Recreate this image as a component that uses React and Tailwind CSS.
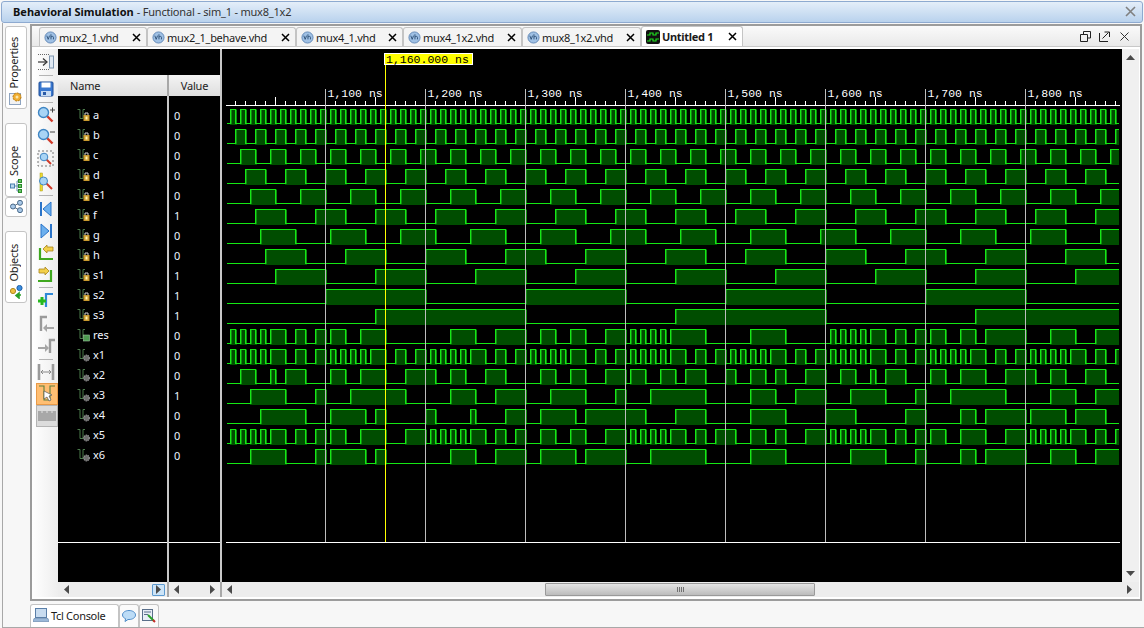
import React from "react";

const UI = { fontFamily: '"Noto Sans", "Liberation Sans", sans-serif' };
const MONO = '"Liberation Mono", monospace';

const clk = (x, s, p, h) => x >= s && (x - s) % p < h;
const mux = (a, b, s) => (s ? b : a);
const calc = (x) => {
  const a = clk(x, 230, 10, 5), b = clk(x, 235, 20, 10), c = clk(x, 240, 30, 15), d = clk(x, 245, 40, 20);
  const e1 = clk(x, 250, 50, 25), f = clk(x, 255, 60, 30), g = clk(x, 260, 70, 35), h = clk(x, 265, 80, 40);
  const s1 = clk(x, 275, 100, 50), s2 = clk(x, 325, 200, 100), s3 = clk(x, 375, 300, 150);
  const x1 = mux(a, b, s1), x2 = mux(c, d, s1), x3 = mux(e1, f, s1), x4 = mux(g, h, s1);
  const x5 = mux(x1, x2, s2), x6 = mux(x3, x4, s2), res = mux(x5, x6, s3);
  return { a, b, c, d, e1, f, g, h, s1, s2, s3, res, x1, x2, x3, x4, x5, x6 };
};

const SIGNALS = [
  ["a", "0", "lock"], ["b", "0", "lock"], ["c", "0", "lock"], ["d", "0", "lock"], ["e1", "0", "lock"],
  ["f", "1", "lock"], ["g", "0", "lock"], ["h", "0", "lock"], ["s1", "1", "lock"], ["s2", "1", "lock"],
  ["s3", "1", "lock"], ["res", "0", "out"], ["x1", "0", "gear"], ["x2", "0", "gear"], ["x3", "1", "gear"],
  ["x4", "0", "gear"], ["x5", "0", "gear"], ["x6", "0", "gear"],
];

function Wave({ name, index }) {
  const base = 123 + index * 20;
  const top = base - 14;
  const X0 = 227, X1 = 1119;
  let line = `M${X0} ${base + 0.5}`;
  let prev = false;
  let start = X0;
  const rects = [];
  const edges = [];
  for (let x = 230; x < X1; x += 5) {
    const v = calc(x)[name];
    if (v !== prev) {
      const y = v ? top + 0.5 : base + 0.5;
      line += `H${x + 0.5}V${y}`;
      if (v) start = x;
      else rects.push([start, x]);
      edges.push(x);
      prev = v;
    }
  }
  if (prev) rects.push([start, X1]);
  line += `H${X1}`;
  return (
    <g>
      {rects.map(([s, e], i) => (
        <rect key={i} x={s} y={top} width={Math.min(e + 2, X1) - s} height={16} fill="#004d00" />
      ))}
      {edges.map((x, i) => (
        <rect key={i} x={x + 1} y={top + 1} width={1} height={14} fill="#0f8f0f" />
      ))}
      <path d={line} fill="none" stroke="#14e814" strokeWidth="1" />
    </g>
  );
}

function WaveView() {
  const majors = [325, 425, 525, 625, 725, 825, 925, 1025];
  const labels = ["1,100 ns", "1,200 ns", "1,300 ns", "1,400 ns", "1,500 ns", "1,600 ns", "1,700 ns", "1,800 ns"];
  const ticks = [];
  for (let x = 235; x < 1120; x += 10) ticks.push(x);
  return (
    <svg width="900" height="533" viewBox="222 49 900 533" shapeRendering="crispEdges" className="block shrink-0 bg-black">
      {ticks.map((x) => {
        const m = (x - 25) % 100 === 0;
        const mid = (x - 75) % 100 === 0;
        if (m) return null;
        return <rect key={x} x={x} y={mid ? 97 : 101} width="1" height={mid ? 8 : 4} fill="#ffffff" />;
      })}
      <rect x="226" y="105" width="894" height="1" fill="#ffffff" />
      {SIGNALS.map(([n], i) => (
        <Wave key={n} name={n} index={i} />
      ))}
      {majors.map((x) => (
        <rect key={x} x={x} y="89" width="1" height="453" fill="#bdbdbd" />
      ))}
      {majors.map((x, i) => (
        <text key={x} x={x + 2.5} y="97" fontFamily={MONO} fontSize="11.5" fill="#ffffff" shapeRendering="auto">
          {labels[i]}
        </text>
      ))}
      <rect x="385" y="65" width="1" height="477" fill="#ffff00" />
      <rect x="226" y="542" width="894" height="1" fill="#ffffff" />
      <rect x="384" y="53" width="89" height="12" fill="#ffffff" />
      <rect x="385" y="54" width="87" height="10" fill="#ffff00" />
      <text x="386" y="62.500" fontFamily={MONO} fontSize="11.5" fill="#000000" shapeRendering="auto">1,160.000 ns</text>
    </svg>
  );
}

function VhIcon() {
  return (
    <svg width="13" height="13" viewBox="0 0 14 14" className="shrink-0">
      <circle cx="7" cy="7" r="6" fill="#9fc0e4" stroke="#5f86b4" />
      <path d="M3 5l1.500 4 1.500-4M7.500 3.500v5.500M7.500 6.500c1-1 2.700-1 2.700.5v2" fill="none" stroke="#24476e" strokeWidth="0.9" />
    </svg>
  );
}

function WaveTabIcon() {
  return (
    <svg width="14" height="14" viewBox="0 0 14 14" className="shrink-0">
      <rect width="14" height="14" rx="2" fill="#111" />
      <path d="M1 5h3V3h3v2h3V3h3M1 11h3V9h3v2h3V9h3" fill="none" stroke="#20e020" strokeWidth="1.2" />
    </svg>
  );
}

function CloseX() {
  return (
    <svg width="9" height="9" viewBox="0 0 9 9" className="shrink-0">
      <path d="M1 1l7 7M8 1l-7 7" stroke="#000" strokeWidth="1.5" />
    </svg>
  );
}

function FileTab({ w, label, active, waveform }) {
  return (
    <div
      className={`${w} flex items-center pl-[4px] pr-[5px] border border-b-0 border-[#c4c4c4] rounded-t-[3px] ${active ? "bg-white font-bold h-[20px]" : "bg-[#f4f4f4] h-[19px]"}`}
    >
      {waveform ? <WaveTabIcon /> : <VhIcon />}
      <span className="ml-[2px] text-[11px] tracking-[-0.3px] text-[#1a1a1a] flex-1 whitespace-nowrap leading-none">{label}</span>
      <CloseX />
    </div>
  );
}

function Lens({ mark }) {
  return (
    <svg width="18" height="18" viewBox="0 0 18 18">
      <path d="M9.500 9.500l6 6" stroke="#d03a2a" strokeWidth="2.4" />
      <circle cx="6.500" cy="6.500" r="5" fill="#a8d4f5" stroke="#3f86c4" strokeWidth="1.4" />
      {mark === "+" && <path d="M13 4h5M15.500 1.500v5" stroke="#444" strokeWidth="1" />}
      {mark === "-" && <path d="M13 4h5" stroke="#444" strokeWidth="1" />}
    </svg>
  );
}

const TOOLS = {
  jump: (
    <svg width="18" height="18" viewBox="0 0 18 18">
      <path d="M1 1.500h12M1 16.500h12" stroke="#666" strokeDasharray="1 1" />
      <path d="M1 9h8" stroke="#333" strokeWidth="1.2" />
      <path d="M6 5.500L10 9l-4 3.500" fill="none" stroke="#333" strokeWidth="1.2" />
      <rect x="12.500" y="3" width="4" height="12" fill="#dfe8f2" stroke="#7c94ad" />
    </svg>
  ),
  save: (
    <svg width="16" height="16" viewBox="0 0 16 16">
      <rect x="1" y="1" width="14" height="14" rx="1" fill="#3a78d0" stroke="#1f4f98" />
      <rect x="3.500" y="1.500" width="9" height="5" fill="#ffffff" />
      <rect x="3" y="10" width="10" height="5" fill="#c8dcf4" />
      <rect x="5" y="11" width="3" height="3" fill="#2a5ba8" />
    </svg>
  ),
  plus: <Lens mark="+" />,
  minus: <Lens mark="-" />,
  fit: (
    <svg width="18" height="18" viewBox="0 0 18 18">
      <rect x="1" y="1" width="15" height="15" fill="#f4f4f4" stroke="#777" strokeDasharray="2 2" />
      <path d="M9 9l5 5" stroke="#d03a2a" strokeWidth="2" />
      <circle cx="7" cy="7" r="3.800" fill="#a8d4f5" stroke="#3f86c4" />
    </svg>
  ),
  cursor: (
    <svg width="18" height="20" viewBox="0 0 18 20">
      <rect x="3" y="1" width="2.500" height="18" fill="#ecd930" stroke="#a89a18" strokeWidth="0.5" />
      <path d="M9 11l6 6" stroke="#d03a2a" strokeWidth="2" />
      <circle cx="6.500" cy="9" r="4" fill="#a8d4f5" stroke="#3f86c4" />
    </svg>
  ),
  first: (
    <svg width="14" height="16" viewBox="0 0 14 16">
      <rect x="1" y="1" width="2" height="14" fill="#2b74c8" />
      <path d="M12 1v14L4 8z" fill="#6db0ee" stroke="#2b74c8" />
    </svg>
  ),
  last: (
    <svg width="14" height="16" viewBox="0 0 14 16">
      <rect x="11" y="1" width="2" height="14" fill="#2b74c8" />
      <path d="M2 1v14l8-7z" fill="#6db0ee" stroke="#2b74c8" />
    </svg>
  ),
  prev: (
    <svg width="18" height="18" viewBox="0 0 18 18">
      <path d="M3 4v11h13" fill="none" stroke="#3fa81f" strokeWidth="2.2" />
      <path d="M6 5l4-4v2h6v4h-6v2z" fill="#f3d04a" stroke="#a8861c" strokeWidth="0.8" />
    </svg>
  ),
  next: (
    <svg width="18" height="18" viewBox="0 0 18 18">
      <path d="M1 15h13V4" fill="none" stroke="#3fa81f" strokeWidth="2.2" />
      <path d="M12 5L8 1v2H2v4h6v2z" fill="#f3d04a" stroke="#a8861c" strokeWidth="0.8" />
    </svg>
  ),
  add: (
    <svg width="18" height="18" viewBox="0 0 18 18">
      <path d="M9 16V3h7" fill="none" stroke="#2f8ad8" strokeWidth="2.2" />
      <path d="M1 10h8M5 6v8" stroke="#27b81f" strokeWidth="3" />
    </svg>
  ),
  mprev: (
    <svg width="18" height="18" viewBox="0 0 18 18">
      <path d="M4 16V2h6" fill="none" stroke="#9a9a9a" strokeWidth="2.4" />
      <path d="M17 12H10V9l-4 4 4 4v-3h7z" fill="#a6a6a6" />
    </svg>
  ),
  mnext: (
    <svg width="18" height="18" viewBox="0 0 18 18">
      <path d="M13 16V3h5" fill="none" stroke="#9a9a9a" strokeWidth="2.4" />
      <path d="M1 10h7V7l4 4-4 4v-3H1z" fill="#a6a6a6" />
    </svg>
  ),
  swap: (
    <svg width="18" height="18" viewBox="0 0 18 18">
      <path d="M2 1v16M16 1v16" stroke="#9a9a9a" strokeWidth="2.6" />
      <path d="M4 9h10M6 7L4 9l2 2M12 7l2 2-2 2" fill="none" stroke="#888" />
    </svg>
  ),
  active: (
    <svg width="18" height="18" viewBox="0 0 18 18">
      <path d="M1 1h5v14h6V1h5" fill="none" stroke="#5c7f3c" strokeWidth="1.1" />
      <path d="M6 6l8 4-3 1 2 4-2 1-2-4-3 2z" fill="#ffffff" stroke="#555" strokeWidth="0.7" />
    </svg>
  ),
  bars: (
    <svg width="18" height="10" viewBox="0 0 18 10">
      <rect width="18" height="10" fill="#a8a8a8" />
      <path d="M4 0v2M9 0v2M14 0v2" stroke="#e2e2e2" />
    </svg>
  ),
};

function Tool({ icon, h = "h-[22px]" }) {
  return <div className={`${h} flex items-center justify-center`}>{TOOLS[icon]}</div>;
}
function Sep({ h }) {
  return (
    <div className={`${h} flex items-center justify-center`}>
      <div className="w-[14px] h-px bg-[#b4b4b4]" />
    </div>
  );
}

function Toolbar() {
  return (
    <div className="w-[26px] shrink-0 flex flex-col bg-gradient-to-r from-white to-[#eeeeee] pt-[1px] pl-[1px]">
      <Tool icon="jump" h="h-[24px]" />
      <Sep h="h-[3px]" />
      <Tool icon="save" h="h-[24px]" />
      <Sep h="h-[3px]" />
      <Tool icon="plus" />
      <Tool icon="minus" />
      <Tool icon="fit" />
      <Tool icon="cursor" h="h-[23px]" />
      <Sep h="h-[5px]" />
      <Tool icon="first" />
      <Tool icon="last" />
      <Tool icon="prev" />
      <Tool icon="next" />
      <Sep h="h-[3px]" />
      <Tool icon="add" />
      <div className="h-[2px]" />
      <Tool icon="mprev" />
      <Tool icon="mnext" />
      <Sep h="h-[4px]" />
      <Tool icon="swap" />
      <div className="h-[22px] ml-[3px] flex items-center justify-center bg-[#ffbe72] border border-[#e89a48]">{TOOLS.active}</div>
      <div className="h-[22px] ml-[3px] flex items-center justify-center bg-[#dcdcdc] border border-[#b4b4b4]">{TOOLS.bars}</div>
    </div>
  );
}

function SigIcon({ kind }) {
  return (
    <svg width="14" height="14" viewBox="0 0 14 14" className="shrink-0">
      <path d="M0.500 1.500h2.500v9h3v-9h2" fill="none" stroke="#4a7a4a" strokeWidth="1" />
      {kind === "lock" && (
        <g>
          <rect x="6.500" y="7" width="6" height="6" fill="#c99a2e" />
          <path d="M8 7V5h3v2" fill="none" stroke="#d0d0d0" />
          <rect x="8.500" y="8.500" width="2" height="3" fill="#fff2b0" />
        </g>
      )}
      {kind === "out" && <rect x="6.500" y="7" width="6" height="6" fill="#4d9a50" stroke="#9fc8a0" strokeWidth="0.6" />}
      {kind === "gear" && <circle cx="9.500" cy="10" r="2.800" fill="#6e6e6e" stroke="#9a9a9a" strokeWidth="1.2" strokeDasharray="1.2 0.8" />}
    </svg>
  );
}

function HeadCell({ w, children }) {
  return (
    <div className={`${w} h-[21px] flex items-center pl-[12px] bg-gradient-to-b from-[#f4f4f4] to-[#dedede] text-[11px] tracking-[-0.2px] text-[#1c1c1c] leading-none`}>
      {children}
    </div>
  );
}

function Tri({ dir, dark }) {
  const d = { l: "M5 0v9L0 4.500z", r: "M0 0v9l5-4.500z", u: "M0 5h9L4.500 0z", D: "M0 0h9L4.500 5z" }[dir];
  const wide = dir === "u" || dir === "D";
  return (
    <svg width={wide ? 9 : 5} height={wide ? 5 : 9} viewBox={wide ? "0 0 9 5" : "0 0 5 9"} className="shrink-0">
      <path d={d} fill={dark || "#4a4a4a"} />
    </svg>
  );
}

function NamePane() {
  return (
    <div className="w-[162px] shrink-0 flex flex-col bg-black">
      <div className="h-[26px]" />
      <div className="flex">
        <HeadCell w="w-[109px]">Name</HeadCell>
        <div className="w-[2px] bg-[#a8a8a8]" />
        <HeadCell w="flex-1 justify-center !pl-0">Value</HeadCell>
      </div>
      <div className="flex-1 flex min-h-0">
        <div className="w-[109px] flex flex-col">
          <div className="h-[9px]" />
          {SIGNALS.map(([n, , k]) => (
            <div key={n} className="h-[20px] flex items-center pl-[19px] gap-[2px] pb-[1px] text-[11px] text-[#f2f6ff] leading-none">
              <SigIcon kind={k} />
              <span>{n}</span>
            </div>
          ))}
          <div className="flex-1" />
          <div className="h-px bg-white mb-[39px]" />
        </div>
        <div className="w-[2px] bg-[#c8c8c8]" />
        <div className="flex-1 flex flex-col">
          <div className="h-[9px]" />
          {SIGNALS.map(([n, v]) => (
            <div key={n} className="h-[20px] flex items-center pl-[5px] text-[11px] text-[#eaf4ff] leading-none">
              {v}
            </div>
          ))}
          <div className="flex-1" />
          <div className="h-px bg-white mb-[39px]" />
        </div>
      </div>
    </div>
  );
}

function BottomScrolls() {
  return (
    <div className="h-[15px] flex bg-[#ededed]">
      <div className="w-[109px] flex items-center pl-[6px] pr-[2px] justify-between">
        <Tri dir="l" />
        <div className="w-[13px] h-[12px] flex items-center justify-center bg-[#cde4f7] border border-[#5d9ad0] rounded-[1px]">
          <Tri dir="r" />
        </div>
      </div>
      <div className="w-[2px] bg-[#a8a8a8]" />
      <div className="w-[51px] flex items-center px-[5px] justify-between">
        <Tri dir="l" />
        <Tri dir="r" />
      </div>
      <div className="w-[2px] bg-[#a8a8a8]" />
      <div className="flex-1 flex items-center pl-[5px] pr-[7px]">
        <Tri dir="l" />
        <div className="w-[313px] shrink-0" />
        <div className="w-[270px] h-[13px] shrink-0 flex items-center justify-center gap-[1px] bg-gradient-to-b from-[#e4e4e4] to-[#bcbcbc] border border-[#9a9a9a] rounded-[1px]">
          <div className="w-px h-[5px] bg-[#707070]" />
          <div className="w-px h-[5px] bg-[#707070]" />
          <div className="w-px h-[5px] bg-[#707070]" />
          <div className="w-px h-[5px] bg-[#707070]" />
        </div>
        <div className="flex-1" />
        <Tri dir="r" />
      </div>
    </div>
  );
}

function SideTab({ h, label, icon }) {
  return (
    <div className={`${h} w-[22px] flex flex-col items-center justify-end pb-[3px] gap-[3px] bg-white border border-[#c4c4c4] rounded-[3px]`}>
      {label && (
        <span className="[writing-mode:vertical-rl] rotate-180 mr-[5px] text-[11px] tracking-[-0.2px] text-[#1a1a1a] leading-none whitespace-nowrap">{label}</span>
      )}
      {icon}
    </div>
  );
}

const propIcon = (
  <svg width="14" height="14" viewBox="0 0 14 14">
    <rect x="0.500" y="2.500" width="11" height="11" fill="#f2f2f2" stroke="#8ea4c0" />
    <circle cx="8" cy="6" r="4" fill="#f0ad30" stroke="#b57a14" strokeDasharray="2 1" />
    <circle cx="8" cy="6" r="1.500" fill="#fbe6a8" />
  </svg>
);
const scopeIcon = (
  <svg width="12" height="14" viewBox="0 0 12 14">
    <path d="M5 7h4M7 2v10M7 2h2M7 12h2" stroke="#6a8fb0" fill="none" />
    <rect x="0.500" y="5" width="4" height="4" fill="#bcd8f0" stroke="#4a80b0" />
    <rect x="8.500" y="0.500" width="3" height="3" fill="#6ac86a" stroke="#2a8a2a" />
    <rect x="8.500" y="5.500" width="3" height="3" fill="#6ac86a" stroke="#2a8a2a" />
    <rect x="8.500" y="10.500" width="3" height="3" fill="#6ac86a" stroke="#2a8a2a" />
  </svg>
);
const nodesIcon = (
  <svg width="13" height="13" viewBox="0 0 13 13">
    <path d="M3 6.500L10 2.500M3 6.500L10 10.500" stroke="#607080" />
    <circle cx="3" cy="6.500" r="2.500" fill="#a8c8e8" stroke="#4a6a8a" />
    <circle cx="10" cy="2.800" r="2.500" fill="#a8c8e8" stroke="#4a6a8a" />
    <circle cx="10" cy="10.200" r="2.500" fill="#a8c8e8" stroke="#4a6a8a" />
  </svg>
);
const objIcon = (
  <svg width="13" height="14" viewBox="0 0 13 14">
    <circle cx="3" cy="6" r="2.600" fill="#f0c040" stroke="#b08a20" />
    <circle cx="9.500" cy="3" r="2.600" fill="#3a8ee0" stroke="#1f60a8" />
    <path d="M7 10h4M9 8l-3 2.500 3 2.500z" stroke="#2aa02a" strokeWidth="1.600" fill="#2aa02a" />
  </svg>
);

function Sidebar() {
  return (
    <div className="w-[27px] shrink-0 flex flex-col items-start pl-[2px]">
      <div className="h-[3px]" />
      <SideTab h="h-[83px]" label="Properties" icon={propIcon} />
      <div className="h-[14px]" />
      <SideTab h="h-[74px]" label="Scope" icon={scopeIcon} />
      <SideTab h="h-[20px]" icon={nodesIcon} />
      <div className="h-[14px]" />
      <SideTab h="h-[72px]" label="Objects" icon={objIcon} />
    </div>
  );
}

export default function App() {
  return (
    <div className="w-[1144px] h-[628px] flex flex-col bg-[#f7f7f7] overflow-hidden" style={UI}>
      <div className="h-[22px] mt-[1px] mx-[1px] shrink-0 flex items-center pl-[11px] pr-[6px] pb-[1px] bg-gradient-to-b from-[#e4eef9] to-[#b9d2ed] border border-[#8eaad0] rounded-[3px] text-[11px] text-[#222] leading-none">
        <span className="font-bold text-[#111]">Behavioral Simulation</span>
        <span className="ml-[3px] tracking-[-0.2px] text-[#333]">- Functional - sim_1 - mux8_1x2</span>
        <div className="flex-1" />
        <svg width="11" height="11" viewBox="0 0 11 11">
          <path d="M1 1l9 9M10 1l-9 9" stroke="#808080" strokeWidth="1.600" />
        </svg>
      </div>

      <div className="flex-1 min-h-0 flex ml-[2px] border-l border-[#a8a8a8]">
        <Sidebar />
        <div className="w-[1112px] h-[577px] mt-[1px] flex flex-col border-2 border-[#9c9c9c] bg-white">
          <div className="h-[21px] shrink-0 flex items-end pl-[7px] pr-[10px] bg-gradient-to-b from-[#fafafa] to-[#e9e9e9] border-b border-[#c8c8c8]">
            <FileTab w="w-[108px]" label="mux2_1.vhd" />
            <FileTab w="w-[149px]" label="mux2_1_behave.vhd" />
            <FileTab w="w-[107px]" label="mux4_1.vhd" />
            <FileTab w="w-[119px]" label="mux4_1x2.vhd" />
            <FileTab w="w-[119px]" label="mux8_1x2.vhd" />
            <FileTab w="w-[102px]" label="Untitled 1" active waveform />
            <div className="flex-1" />
            <div className="h-[19px] flex items-center gap-[8px]">
              <svg width="11" height="11" viewBox="0 0 11 11">
                <path d="M3.500 3V.5h7V7H8M.5 3.500h7v7h-7z" fill="none" stroke="#222" />
              </svg>
              <svg width="11" height="11" viewBox="0 0 11 11">
                <path d="M.5 2v8.500H9M3.500 7.500l6-6M5.500 1h5v5" fill="none" stroke="#222" />
              </svg>
              <svg width="11" height="11" viewBox="0 0 11 11" className="ml-[1px]">
                <path d="M1.500 1.500l8 8M9.500 1.500l-8 8" stroke="#333" />
              </svg>
            </div>
          </div>

          <div className="flex-1 min-h-0 flex pt-[2px] pb-[2px] pr-[1px]">
            <Toolbar />
            <div className="flex-1 min-w-0 flex flex-col">
              <div className="h-[533px] flex">
                <NamePane />
                <div className="w-[2px] bg-[#c8c8c8]" />
                <WaveView />
                <div className="flex-1 flex flex-col items-center justify-between py-[6px] bg-[#f0f0f0]">
                  <Tri dir="u" />
                  <Tri dir="D" />
                </div>
              </div>
              <BottomScrolls />
            </div>
          </div>
        </div>
      </div>

      <div className="h-[27px] shrink-0 flex items-end pl-[27px] ml-[2px] border-l border-b border-[#a8a8a8]">
        <div className="w-[89px] h-[23px] flex items-center gap-[2px] pl-[2px] pb-[2px] bg-white border border-b-0 border-[#c4c4c4] rounded-t-[3px] text-[11px] tracking-[-0.3px] text-[#1a1a1a] leading-none">
          <svg width="16" height="16" viewBox="0 0 16 16">
            <rect x="2.500" y="1.500" width="11" height="9" fill="#c8dcf0" stroke="#5a7fa8" />
            <path d="M1 11.500h14l1 3H0z" fill="#9ab8d8" stroke="#5a7fa8" strokeWidth="0.6" />
          </svg>
          <span>Tcl Console</span>
        </div>
        <div className="w-[20px] h-[23px] flex items-center justify-center pb-[1px] bg-[#fafafa] border border-b-0 border-[#c4c4c4] rounded-t-[3px]">
          <svg width="14" height="12" viewBox="0 0 14 12">
            <path d="M7 .5c3.600 0 6.500 1.900 6.500 4.500S10.600 9.500 7 9.500H6L3 11.500l.6-2.800C1.800 8 .5 6.700 .5 5 .5 2.400 3.400 .5 7 .5z" fill="#bcdcf6" stroke="#4f8cc8" />
          </svg>
        </div>
        <div className="w-[20px] h-[23px] flex items-center justify-center pb-[1px] bg-[#fafafa] border border-b-0 border-[#c4c4c4] rounded-t-[3px]">
          <svg width="14" height="14" viewBox="0 0 14 14">
            <rect x="0.500" y="0.500" width="10" height="11" fill="#e8eef6" stroke="#5a6f8a" />
            <path d="M2 3h7M2 5.500h4" stroke="#5a6f8a" />
            <path d="M6 6l6 6" stroke="#2aa02a" strokeWidth="2" />
            <path d="M11 11l2 2" stroke="#c82a2a" strokeWidth="2" />
          </svg>
        </div>
      </div>
    </div>
  );
}
